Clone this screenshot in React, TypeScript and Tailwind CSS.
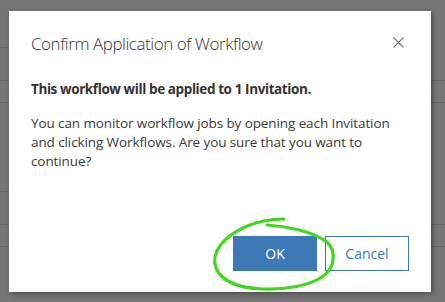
import React from "react";

export default function App() {
  const font = { fontFamily: '"Open Sans", "Noto Sans", sans-serif' };
  return (
    <div className="relative w-[445px] h-[302px] overflow-hidden bg-[#767676]" style={font}>
      {/* background page rows (dimmed behind overlay) */}
      <div className="absolute inset-0 flex flex-col">
        <div className="h-[48px] shrink-0 border-b border-[#666] w-[200px]" />
        <div className="h-[33px] shrink-0 border-b border-[#666]" />
        <div className="h-[22px] shrink-0 border-b border-[#666]" />
        <div className="h-[89px] shrink-0 border-b border-[#666] w-[200px]" />
        <div className="h-[33px] shrink-0 border-b border-[#666]" />
        <div className="h-[22px] shrink-0 border-b border-[#666]" />
      </div>

      {/* dialog */}
      <div className="absolute left-[9px] top-[11px] w-[422px] h-[281px] bg-white shadow-[2px_2px_5px_rgba(0,0,0,0.35)] flex flex-col">
        <div className="flex items-start justify-between pl-[22px] pr-[27px] pt-[21px]">
          <div className="text-[17px] leading-[24px] tracking-[-0.45px] text-[#333] font-light">Confirm Application of Workflow</div>
          <svg width="11" height="11" viewBox="0 0 11 11" className="mt-[5px]">
            <path d="M0.5 0.5 L10.5 10.5 M10.5 0.5 L0.5 10.5" stroke="#777" strokeWidth="1.1" fill="none" />
          </svg>
        </div>
        <div className="px-[22px] pt-[23px] text-[13.5px] text-[#333]">
          <div className="font-bold leading-[20px] tracking-[-0.4px]">This workflow will be applied to 1 Invitation.</div>
          <div className="mt-[15px] leading-[19px] tracking-[-0.1px] text-[#3a3a3a]">
            You can monitor workflow jobs by opening each Invitation
            <br />
            and clicking Workflows. Are you sure that you want to
            <br />
            continue?
          </div>
        </div>
        <div className="mt-auto flex justify-end gap-[8px] pr-[22px] pb-[21px]">
          <button className="w-[84px] h-[35px] bg-[#3c79b6] text-white text-[14px]">OK</button>
          <button className="w-[84px] h-[35px] bg-white border border-[#3c79b6] text-[#3c79b6] text-[14px]">Cancel</button>
        </div>
      </div>

      {/* hand-drawn highlight */}
      <svg className="absolute inset-0 pointer-events-none" width="445" height="302" viewBox="0 0 445 302">
        <path
          d="M267,225 C285,226 312,231 327,242 C336,250 336,268 322,277 C308,286 285,290 262,289 C240,288 222,282 216,268 C210,252 225,236 245,227 C258,221 272,219 284,219"
          stroke="#3fd81e"
          strokeWidth="3.2"
          strokeLinecap="round"
          strokeLinejoin="round"
          fill="none"
        />
      </svg>
    </div>
  );
}
